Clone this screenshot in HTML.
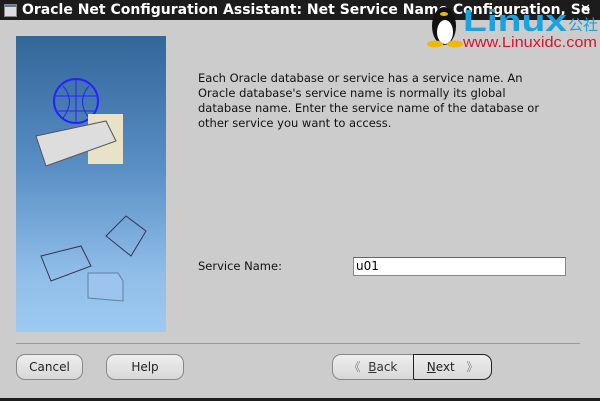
<!DOCTYPE html>
<html><head><style>
body{margin:0;width:600px;height:401px;background:#cccccc;position:relative;overflow:hidden;font-family:"DejaVu Sans","Liberation Sans",sans-serif;}
.t{position:absolute;left:0;top:0;width:600px;height:20px;background:#1c1c1c;color:#fff;font-weight:bold;font-size:14px;line-height:20px;}
.t span{position:absolute;left:22px;top:0;white-space:nowrap}
.ico{position:absolute;left:4px;top:4px;width:11px;height:11px;background:#ddd;border:1px solid #888;box-shadow:inset 0 2px 0 #5577aa}
.pic{position:absolute;left:16px;top:36px;width:150px;height:296px;background:linear-gradient(#336699,#5a8fc6 45%,#8fbde8 80%,#9ccaf0);}
.txt{position:absolute;left:198px;top:71px;font-size:11.5px;line-height:15px;color:#111;width:380px}
.lbl{position:absolute;left:198px;top:259px;font-size:11.5px;color:#111}
.in{position:absolute;left:353px;top:257px;width:209px;height:17px;background:#fff;border:1px solid #888;border-top-color:#666;font-size:12px;line-height:17px;padding-left:2px;box-sizing:content-box}
.sep{position:absolute;left:16px;top:343px;width:564px;height:1px;background:#999}
.b{position:absolute;top:354px;border:1px solid #888;border-radius:9px;background:linear-gradient(#eee,#d8d8d8);font-size:12px;line-height:24px;text-align:center;color:#222;box-sizing:border-box;height:26px}
.bot{position:absolute;left:0;top:398px;width:600px;height:3px;background:#1c1c1c}
</style></head><body>
<div class="t"><div class="ico"></div><span>Oracle Net Configuration Assistant: Net Service Name Configuration, Se</span><span style="left:580px;font-size:13px">✕</span></div>
<svg style="position:absolute;left:420px;top:0" width="180" height="50">
<ellipse cx="24" cy="26" rx="12" ry="19" fill="#111"/><ellipse cx="25" cy="32" rx="8" ry="12" fill="#fff"/>
<ellipse cx="15" cy="44" rx="8" ry="3.5" fill="#f2b800"/><ellipse cx="35" cy="44" rx="8" ry="3.5" fill="#f2b800"/><ellipse cx="24" cy="14" rx="4" ry="2" fill="#f2b800"/>
<text x="43" y="31" font-family="Liberation Sans" font-weight="bold" font-size="31" fill="#1aa3e0" textLength="104" lengthAdjust="spacingAndGlyphs">Linux</text>
<text x="148" y="30" font-family="Noto Sans CJK SC,sans-serif" font-size="15" fill="#1aa3e0">公社</text>
<text x="43" y="47" font-family="Liberation Sans" font-size="15" fill="#e0102a" textLength="134" lengthAdjust="spacingAndGlyphs">www.Linuxidc.com</text>
</svg>
<div class="pic">
<svg width="150" height="296">
<circle cx="60" cy="65" r="22" fill="none" stroke="#2222ff" stroke-width="2"/>
<path d="M40 60h40M42 75h36M60 43v44M47 50q13 15 0 32M73 50q-13 15 0 32" stroke="#2222ff" fill="none"/>
<rect x="72" y="78" width="35" height="50" fill="#e8e2c8"/>
<path d="M20 100l70-15 10 20-70 25z" fill="#ddd" stroke="#555"/>
<path d="M90 200l20-20 20 15-15 25z" fill="none" stroke="#335"/>
<path d="M25 220l40-10 10 20-40 15z" fill="none" stroke="#335"/>
<path d="M72 262v-25h30l5 8v20z" fill="#9cc4ee" stroke="#6080a0"/>
</svg></div>
<div class="txt">Each Oracle database or service has a service name. An<br>Oracle database's service name is normally its global<br>database name. Enter the service name of the database or<br>other service you want to access.</div>
<div class="lbl">Service Name:</div>
<div class="in">u01</div>
<div class="sep"></div>
<div class="b" style="left:16px;width:67px">Cancel</div>
<div class="b" style="left:106px;width:78px">Help</div>
<div class="b" style="left:332px;width:82px;border-radius:9px 0 0 9px;color:#333"><span style="color:#888">《</span>&nbsp;&nbsp;<u>B</u>ack</div>
<div class="b" style="left:413px;width:79px;border:1px solid #222;border-radius:0 9px 9px 2px"><u>N</u>ext&nbsp;&nbsp;&nbsp;<span style="color:#888">》</span></div>
<div class="bot"></div>
</body></html>
